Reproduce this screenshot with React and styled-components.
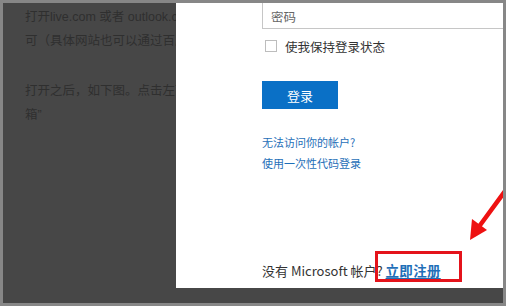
import React from "react";
import styled, { createGlobalStyle } from "styled-components";

const Global = createGlobalStyle`
  html, body { margin: 0; padding: 0; background: #fff; }
  body { font-family: "Noto Sans", "Noto Sans CJK SC", sans-serif; }
  * { box-sizing: border-box; }
`;

const Frame = styled.div`
  width: 506px;
  height: 306px;
  border: 3px solid #878787;
  background: #474747;
  display: flex;
  align-items: flex-start;
  overflow: hidden;
`;

const Article = styled.div`
  width: 173px;
  flex: none;
  overflow: hidden;
  padding: 2px 0 0 22px;
  color: #2f2f2f;
  font-family: "Liberation Sans", "Noto Sans CJK SC", sans-serif;
  font-size: 12.5px;
  line-height: 24px;
`;

const Line = styled.div`
  white-space: nowrap;
  margin-top: ${(p) => (p.$gap ? "26px" : "0")};
`;

const Panel = styled.div`
  position: relative;
  flex: 1;
  height: 285px;
  background: #fff;
  overflow: hidden;
  padding-left: 86px;
  font-family: "Noto Sans CJK SC", sans-serif;
`;

const Input = styled.div`
  margin-top: -2px;
  width: 300px;
  height: 28px;
  border: 1px solid #c6c6c6;
  display: flex;
  align-items: center;
  padding: 2px 0 0 8px;
  color: #666;
  font-size: 12.5px;
`;

const CheckRow = styled.label`
  margin-top: 9px;
  height: 16px;
  display: flex;
  align-items: center;
  gap: 8px;
  padding-left: 3px;
  color: #333;
  font-size: 12.5px;
`;

const Box = styled.span`
  width: 12px;
  height: 12px;
  border: 1px solid #bdbdbd;
  background: #fff;
  flex: none;
`;

const Button = styled.div`
  margin-top: 27px;
  width: 76px;
  height: 28px;
  background: #0a70c6;
  color: #fff;
  font-size: 13px;
  display: flex;
  align-items: center;
  justify-content: center;
`;

const Links = styled.div`
  margin-top: 23px;
  display: flex;
  flex-direction: column;
`;

const Link = styled.div`
  color: #1f6fb8;
  font-size: 11px;
  line-height: 21px;
  white-space: nowrap;
`;

const Footer = styled.div`
  margin-top: 86px;
  font-size: 13px;
  line-height: 20px;
  color: #333;
  white-space: nowrap;
`;

const Signup = styled.span`
  color: #1f6fb8;
  font-weight: 700;
  font-size: 13.5px;
  letter-spacing: 0.3px;
  text-decoration: underline;
  text-decoration-thickness: 1px;
  text-underline-offset: 2px;
`;

const Highlight = styled.div`
  position: absolute;
  left: 199px;
  top: 248px;
  width: 87px;
  height: 31px;
  border: 3px solid #e4131b;
`;

const Arrow = styled.svg`
  position: absolute;
  left: 288px;
  top: 180px;
`;

export default function App() {
  return (
    <>
      <Global />
      <Frame>
        <Article>
          <Line>打开live.com 或者 outlook.com 登录页面，即</Line>
          <Line>可（具体网站也可以通过百度搜索）</Line>
          <Line $gap>打开之后，如下图。点击左下方的“立即注册”创建邮</Line>
          <Line>箱”</Line>
        </Article>
        <Panel>
          <Input>密码</Input>
          <CheckRow>
            <Box />
            使我保持登录状态
          </CheckRow>
          <Button>登录</Button>
          <Links>
            <Link>无法访问你的帐户?</Link>
            <Link>使用一次性代码登录</Link>
          </Links>
          <Footer>
            没有 Microsoft 帐户? <Signup>立即注册</Signup>
          </Footer>
          <Highlight />
          <Arrow width="50" height="64" viewBox="0 0 50 64">
            <line x1="44" y1="4" x2="14" y2="45" stroke="#ee1111" strokeWidth="4.5" strokeLinecap="round" />
            <polygon points="6,57 8,36 23,47" fill="#ee1111" />
          </Arrow>
        </Panel>
      </Frame>
    </>
  );
}
